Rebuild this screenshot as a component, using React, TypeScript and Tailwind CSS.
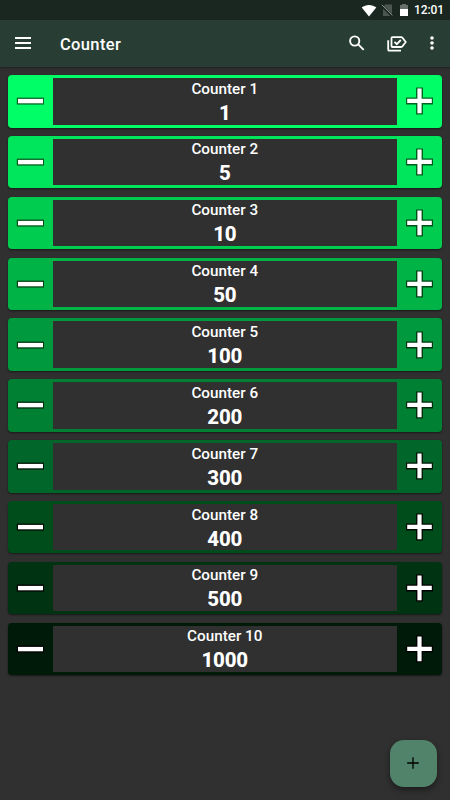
import React, { useState } from "react";

interface Counter {
	name: string;
	value: number;
	step: number;
	color: string;
	outline: string;
}

const initialCounters: Counter[] = [
	{ name: "Counter 1", value: 1, step: 1, color: "bg-[#00ff66]", outline: "fill-[#006622]" },
	{ name: "Counter 2", value: 5, step: 1, color: "bg-[#00e65c]", outline: "fill-[#005c1c]" },
	{ name: "Counter 3", value: 10, step: 1, color: "bg-[#00cc50]", outline: "fill-[#005018]" },
	{ name: "Counter 4", value: 50, step: 1, color: "bg-[#00b347]", outline: "fill-[#004414]" },
	{ name: "Counter 5", value: 100, step: 1, color: "bg-[#00993d]", outline: "fill-[#003810]" },
	{ name: "Counter 6", value: 200, step: 1, color: "bg-[#008033]", outline: "fill-[#002b0c]" },
	{ name: "Counter 7", value: 300, step: 1, color: "bg-[#006629]", outline: "fill-[#001505]" },
	{ name: "Counter 8", value: 400, step: 1, color: "bg-[#004d1c]", outline: "fill-[#000a02]" },
	{ name: "Counter 9", value: 500, step: 1, color: "bg-[#003312]", outline: "fill-black" },
	{ name: "Counter 10", value: 1000, step: 1, color: "bg-[#001a09]", outline: "fill-black" },
];

function StatusBar() {
	return (
		<div className="flex h-5 items-center justify-end bg-[#1a2720] pr-[7px] text-white">
			<svg className="mr-[4px] h-[13px] w-4" viewBox="0 0 16 13" fill="currentColor">
				<path d="M0.7 3.6C4.8 0.2 11.2 0.2 15.3 3.6L8 12.4Z" />
			</svg>
			<svg className="mr-[7px] h-3 w-3" viewBox="0 0 12 12">
				<path d="M4.2 0.6H11V12H2V3z" fill="#4b5650" />
				<path d="M0.4 1.4L11.2 12" stroke="#1a2720" strokeWidth="2.6" />
				<path d="M0.8 0.8L11.4 11.4" stroke="#89918c" strokeWidth="1" />
			</svg>
			<svg className="mr-[6px] h-3 w-2" viewBox="0 0 8 12">
				<path d="M0 1h2V0h4v1h2v4H0z" fill="#66706a" />
				<path d="M0 5h8v7H0z" fill="currentColor" />
			</svg>
			<span className="w-[29px] text-[12px] leading-5 font-medium tracking-[-0.1px] whitespace-nowrap">12:01</span>
		</div>
	);
}

function AppBar() {
	return (
		<header className="relative flex h-[47px] items-center bg-[#283e34] text-white shadow-[0_1px_2px_rgba(0,0,0,0.35)]">
			<button aria-label="Menu" className="ml-[15px] w-4 pb-px">
				<svg className="block h-3 w-4" viewBox="0 0 16 12" fill="currentColor">
					<path d="M0 0h16v2H0zM0 5h16v2H0zM0 10h16v2H0z" />
				</svg>
			</button>
			<h1 className="ml-[29px] flex-1 pt-[3px] text-[16.5px] font-medium tracking-[0.35px]">Counter</h1>
			<button aria-label="Search" className="mr-[22px] pb-px">
				<svg className="block h-4 w-4" viewBox="0 0 16 16" fill="none" stroke="currentColor" strokeWidth="1.9">
					<circle cx="5.7" cy="6" r="4.6" />
					<path d="M9 9.2L14.7 14.9" />
				</svg>
			</button>
			<button aria-label="Labels" className="mr-[23px]">
				<svg className="block h-4 w-5" viewBox="0 0 20 16" fill="none" stroke="currentColor" strokeWidth="1.8">
					<path d="M5.5 1.1H14.2Q15 1.1 15.5 1.8L18.7 6L15.5 10.3Q15 11 14.2 11H5.5Q4.5 11 4.5 10V2.1Q4.5 1.1 5.5 1.1Z" />
					<path d="M1.2 4.2V13.4Q1.2 14.7 2.5 14.7H14" />
					<path d="M7.5 5.8L9.8 8.1L13.8 4" />
				</svg>
			</button>
			<button aria-label="More" className="mr-[16px] pb-px">
				<svg className="block h-[14px] w-1" viewBox="0 0 4 14" fill="currentColor">
					<circle cx="2" cy="2" r="1.8" />
					<circle cx="2" cy="7" r="1.8" />
					<circle cx="2" cy="12" r="1.8" />
				</svg>
			</button>
		</header>
	);
}

function CounterRow({ counter, onChange }: { counter: Counter; onChange: (delta: number) => void }) {
	return (
		<div className={`flex h-[52.5px] rounded-[4px] shadow-[0_1px_2px_rgba(0,0,0,0.5)] ${counter.color}`}>
			<button aria-label="Decrease" onClick={() => onChange(-counter.step)} className="flex w-[44.5px] shrink-0 items-center justify-center">
				<svg className="h-7 w-7" viewBox="0 0 28 28">
					<path d="M0.8 10.6h27.4v7H0.8z" className={counter.outline} />
					<path d="M2 11.9h25v4.4H2z" fill="white" />
				</svg>
			</button>
			<div className="mt-[3px] mb-[3px] flex-1 bg-[#303030] text-center text-white">
				<div className="mt-[1.6px] text-[15.25px] leading-[18px] font-medium">{counter.name}</div>
				<div className="mt-[3px] text-[20.5px] leading-6 font-extrabold tracking-[-0.2px]">{counter.value}</div>
			</div>
			<button aria-label="Increase" onClick={() => onChange(counter.step)} className="flex w-[45px] shrink-0 items-center justify-center">
				<svg className="h-7 w-7" viewBox="0 0 28 28">
					<path d="M10 0.4h7v10h10v7h-10v10h-7v-10h-10v-7h10z" className={counter.outline} />
					<path d="M11.4 1.6h4.2v10.2h10.2v4.2H15.6v10.2h-4.2V16H1.2v-4.2h10.2z" fill="white" />
				</svg>
			</button>
		</div>
	);
}

export default function App() {
	const [counters, setCounters] = useState(initialCounters);

	const updateCounter = (index: number, delta: number) => {
		setCounters(counters.map((c, i) => (i === index ? { ...c, value: c.value + delta } : c)));
	};

	const addCounter = () => {
		setCounters([...counters, { name: `Counter ${counters.length + 1}`, value: 0, step: 1, color: "bg-[#001a09]", outline: "fill-black" }]);
	};

	return (
		<div className="relative flex h-screen flex-col overflow-hidden bg-[#303030] font-[Roboto,sans-serif]">
			<StatusBar />
			<AppBar />
			<main className="flex flex-1 flex-col gap-[8.35px] overflow-hidden px-2 pt-2">
				{counters.map((counter, idx) => (
					<CounterRow key={idx} counter={counter} onChange={(delta) => updateCounter(idx, delta)} />
				))}
			</main>

			{/* Floating add button */}
			<button
				aria-label="Add counter"
				onClick={addCounter}
				className="absolute right-[13px] bottom-[13px] flex h-[47px] w-[47px] items-center justify-center rounded-[14px] bg-[#51836b] pr-px pb-px shadow-[0_3px_6px_rgba(0,0,0,0.45)]">
				<svg className="h-3 w-3" viewBox="0 0 12 12" stroke="black" strokeWidth="1.3">
					<path d="M6 0.2v11.6M0.2 6h11.6" />
				</svg>
			</button>
		</div>
	);
}
